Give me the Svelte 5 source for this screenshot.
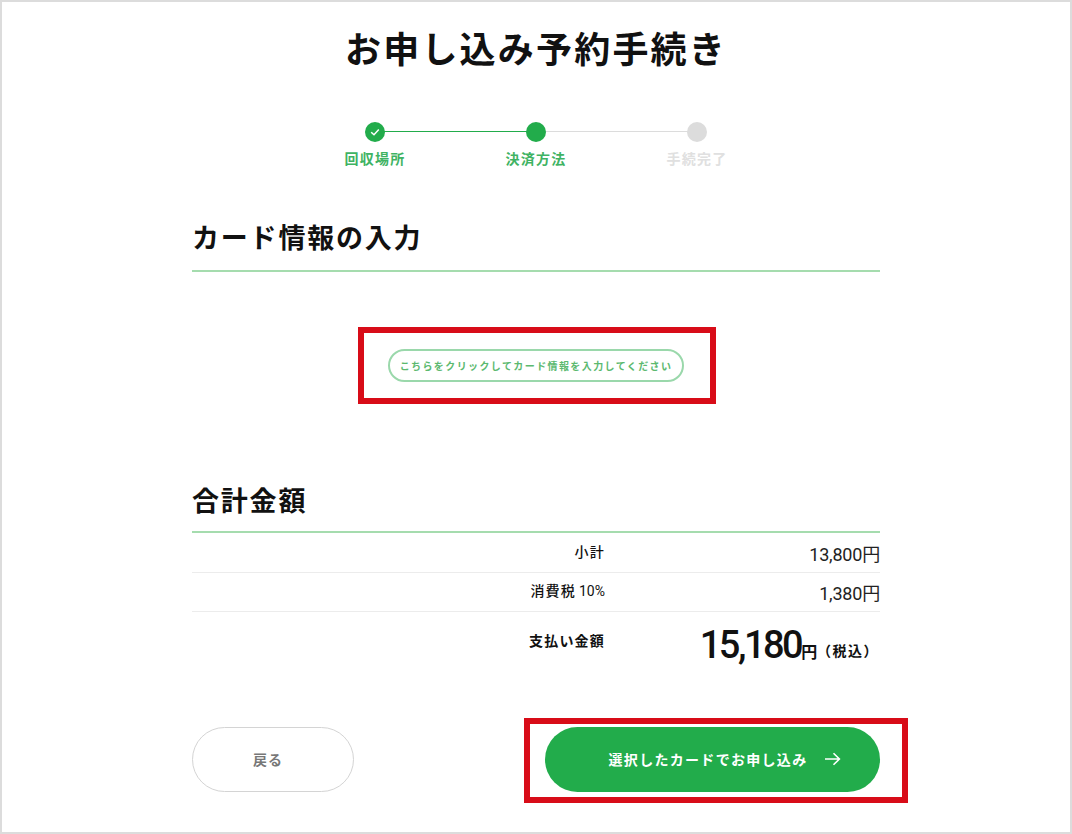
<script lang="ts">
  const steps = [
    { label: "回収場所", state: "done" },
    { label: "決済方法", state: "current" },
    { label: "手続完了", state: "todo" },
  ];

  const rows = [
    { label: "小計", value: "13,800円" },
    { label: "消費税", rate: "10%", value: "1,380円" },
  ];
</script>

<div class="frame">
  <h1>お申し込み予約手続き</h1>

  <ol class="steps">
    {#each steps as step}
      <li class="step {step.state}">
        <span class="dot">
          {#if step.state === "done"}
            <svg width="12" height="12" viewBox="0 0 12 12" fill="none">
              <path d="M2.2 6.2 L5 8.8 L9.8 3.6" stroke="#fff" stroke-width="1.5" />
            </svg>
          {/if}
        </span>
        <span class="step-label">{step.label}</span>
      </li>
    {/each}
  </ol>

  <main class="content">
    <h2 class="card-heading">カード情報の入力</h2>

    <div class="card-action">
      <div class="marker">
        <button class="card-btn">こちらをクリックしてカード情報を入力してください</button>
      </div>
    </div>

    <h2 class="total-heading">合計金額</h2>

    <div class="totals">
      {#each rows as row}
        <div class="row">
          <span class="row-label">{row.label}{#if row.rate}<small>{row.rate}</small>{/if}</span>
          <span class="row-value">{row.value}</span>
        </div>
      {/each}
      <div class="row grand">
        <span class="row-label">支払い金額</span>
        <span class="row-value"><b>15,180</b><em>円</em><i>（税込）</i></span>
      </div>
    </div>

    <div class="actions">
      <button class="back">戻る</button>
      <div class="submit-wrap">
        <button class="submit">
          選択したカードでお申し込み
          <svg width="18" height="14" viewBox="0 0 18 14" fill="none">
            <path d="M1 7 H15 M9.5 1.2 L15.4 7 L9.5 12.8" stroke="#fff" stroke-width="1.6" />
          </svg>
        </button>
      </div>
    </div>
  </main>
</div>

<style>
  :global(body) {
    margin: 0;
    background: #fff;
  }

  .frame {
    box-sizing: border-box;
    width: 1072px;
    height: 834px;
    border: 2px solid #dcdcdc;
    background: #fff;
    color: #111;
    font-family: "Noto Sans CJK JP", "Noto Sans", sans-serif;
    overflow: hidden;
  }

  h1 {
    margin: 22px 0 0;
    font-size: 36px;
    line-height: 46px;
    font-weight: 700;
    letter-spacing: 2.2px;
    text-align: center;
  }

  .steps {
    display: flex;
    justify-content: center;
    margin: 52px 0 0;
    padding: 0;
    list-style: none;
  }

  .step {
    position: relative;
    display: flex;
    flex-direction: column;
    align-items: center;
    width: 161px;
  }

  /* connector to the next step */
  .step:not(:last-child)::after {
    content: "";
    position: absolute;
    top: 9px;
    left: 50%;
    width: 100%;
    height: 1px;
    background: #dcdcdc;
  }

  .step.done:not(:last-child)::after {
    background: #22ac4b;
  }

  .dot {
    position: relative;
    z-index: 1;
    display: flex;
    align-items: center;
    justify-content: center;
    width: 20px;
    height: 20px;
    border-radius: 50%;
    background: #22ac4b;
  }

  .todo .dot {
    background: #dcdcdc;
  }

  .step-label {
    margin-top: 6px;
    font-size: 14px;
    line-height: 20px;
    font-weight: 700;
    letter-spacing: 1.2px;
    color: #3fb363;
  }

  .todo .step-label {
    color: #e0e0e0;
  }

  .content {
    width: 688px;
    margin: 0 0 0 190px;
  }

  h2 {
    margin: 0;
    font-size: 27px;
    line-height: 38px;
    font-weight: 700;
    letter-spacing: 1.8px;
    border-bottom: 2px solid #a5dcae;
  }

  .card-heading {
    margin-top: 50px;
    padding-bottom: 14px;
  }

  .card-action {
    display: flex;
    justify-content: center;
    margin-top: 55px;
  }

  .marker {
    box-sizing: border-box;
    display: flex;
    align-items: center;
    justify-content: center;
    width: 358px;
    height: 77px;
    margin-left: 2px;
    padding-right: 2px;
    border: 6px solid #d80c18;
  }

  .card-btn {
    box-sizing: border-box;
    width: 296px;
    height: 33px;
    padding: 0;
    border: 2px solid #9ad8ab;
    border-radius: 17px;
    background: #fff;
    color: #5cb96f;
    font: 700 10px/1 "Noto Sans CJK JP", sans-serif;
    letter-spacing: 1.4px;
  }

  .total-heading {
    margin-top: 77px;
    padding-bottom: 12px;
  }

  .row {
    display: flex;
    align-items: center;
    height: 39px;
    border-bottom: 1px solid #ececec;
  }

  .row:nth-child(2) {
    height: 38px;
  }

  .row-label {
    box-sizing: border-box;
    width: 413px;
    font-size: 14px;
    line-height: 18px;
    font-weight: 500;
    letter-spacing: 1.2px;
    text-align: right;
    margin-top: -4px;
  }

  .row-label small {
    margin-left: 3px;
    font-size: 14px;
    font-weight: 400;
    letter-spacing: 0;
    font-family: Roboto, sans-serif;
  }

  .row-value {
    flex: 1;
    font-family: Roboto, "Noto Sans CJK JP", sans-serif;
    font-size: 18px;
    text-align: right;
    color: #222;
    letter-spacing: -0.2px;
  }

  .grand {
    height: 66px;
    border-bottom: 0;
  }

  .grand .row-label {
    font-weight: 700;
    letter-spacing: 1.2px;
    margin-top: -10px;
  }

  .grand .row-value {
    padding-right: 1px;
    color: #111;
    white-space: nowrap;
  }

  .grand b {
    font-size: 38px;
    font-weight: 500;
    letter-spacing: -2.5px;
  }

  .grand em {
    font-style: normal;
    font-size: 16px;
    font-weight: 700;
  }

  .grand i {
    font-style: normal;
    font-size: 14px;
    font-weight: 700;
    letter-spacing: 1.5px;
    vertical-align: 2px;
  }

  .actions {
    display: flex;
    justify-content: space-between;
    margin-top: 49px;
  }

  button {
    cursor: pointer;
    font-family: "Noto Sans CJK JP", sans-serif;
  }

  .back {
    box-sizing: border-box;
    width: 162px;
    height: 65px;
    padding: 0 10px 2px 0;
    border: 1px solid #d4d4d4;
    border-radius: 33px;
    background: #fff;
    color: #777;
    font-size: 14px;
    font-weight: 700;
    letter-spacing: 1px;
  }

  .submit-wrap {
    position: relative;
  }

  /* annotation frame drawn over the screenshot */
  .submit-wrap::after {
    content: "";
    position: absolute;
    inset: -9px -28px -11px -21px;
    border: 6px solid #d80c18;
    pointer-events: none;
  }

  .submit {
    display: flex;
    align-items: center;
    justify-content: center;
    gap: 17px;
    width: 335px;
    height: 65px;
    padding: 0 0 1px 26px;
    border: 0;
    border-radius: 33px;
    background: #22ac4b;
    color: #fff;
    font-size: 14px;
    font-weight: 700;
    letter-spacing: 1.3px;
  }
</style>
